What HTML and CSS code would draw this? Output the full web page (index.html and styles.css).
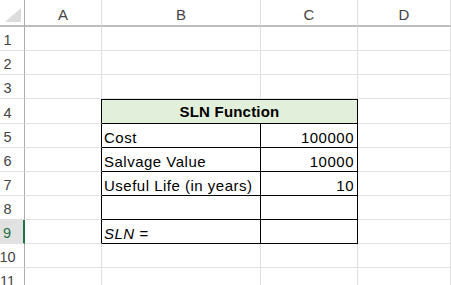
FILE: index.html
```html
<!DOCTYPE html>
<html>
<head>
<meta charset="utf-8">
<link rel="stylesheet" href="styles.css">
</head>
<body>
<div class="sheet">
  <div class="corner"><svg width="24" height="26" viewBox="0 0 24 26"><polygon points="21,8 21,22 5,22" fill="#dcdcdc"/></svg></div>
  <div class="colh">A</div>
  <div class="colh">B</div>
  <div class="colh">C</div>
  <div class="colh">D</div>

  <div class="rowh">1</div><div class="c"></div><div class="c"></div><div class="c"></div><div class="c"></div>
  <div class="rowh">2</div><div class="c"></div><div class="c"></div><div class="c"></div><div class="c"></div>
  <div class="rowh">3</div><div class="c"></div><div class="c"></div><div class="c"></div><div class="c"></div>

  <div class="rowh">4</div><div class="c edge"></div><div class="c title">SLN Function</div><div class="c"></div>
  <div class="rowh">5</div><div class="c edge"></div><div class="c tb lbl">Cost</div><div class="c tc num">100000</div><div class="c"></div>
  <div class="rowh">6</div><div class="c edge"></div><div class="c tb lbl">Salvage Value</div><div class="c tc num">10000</div><div class="c"></div>
  <div class="rowh">7</div><div class="c edge"></div><div class="c tb lbl">Useful Life (in years)</div><div class="c tc num">10</div><div class="c"></div>
  <div class="rowh">8</div><div class="c edge"></div><div class="c tb lbl"></div><div class="c tc num"></div><div class="c"></div>
  <div class="rowh sel">9</div><div class="c edge"></div><div class="c tb lbl italic">SLN =</div><div class="c tc num"></div><div class="c"></div>

  <div class="rowh">10</div><div class="c"></div><div class="c"></div><div class="c"></div><div class="c"></div>
  <div class="rowh">11</div><div class="c"></div><div class="c"></div><div class="c"></div><div class="c"></div>
</div>
</body>
</html>
```
FILE: styles.css
```css
html, body {
  margin: 0;
  padding: 0;
  background: #ffffff;
  overflow: hidden;
}
.sheet {
  display: grid;
  grid-template-columns: 25px 77px 159px 97px 93px;
  grid-template-rows: 27px 24px 24px 24px 25px 24px 24px 24px 24px 24px 24px 24px;
  width: 451px;
  font-family: "Liberation Sans", Arial, sans-serif;
  font-size: 15px;
  line-height: 18px;
  color: #000;
}
.sheet > div {
  box-sizing: border-box;
}
.corner {
  border-right: 1px solid #ababab;
  border-bottom: 2px solid #bdbdbd;
}
.corner svg {
  display: block;
}
.colh {
  display: flex;
  align-items: flex-end;
  justify-content: center;
  padding-bottom: 1px;
  color: #444444;
  border-right: 1px solid #e1e1e1;
  border-bottom: 2px solid #bdbdbd;
}
.rowh {
  display: flex;
  align-items: flex-end;
  justify-content: center;
  padding-right: 9px;
  padding-bottom: 1px;
  font-size: 14.5px;
  color: #444444;
  border-right: 1px solid #ababab;
  border-bottom: 1px solid #e1e1e1;
}
.rowh.sel {
  background: #e1e1e1;
  color: #217346;
  border-right: 2px solid #217346;
}
.c {
  display: flex;
  align-items: flex-end;
  border-right: 1px solid #e1e1e1;
  border-bottom: 1px solid #e1e1e1;
  letter-spacing: 0.5px;
  white-space: nowrap;
}
.c.edge {
  border-right-color: #000;
}
.title {
  grid-column: span 2;
  justify-content: center;
  align-items: center;
  font-weight: bold;
  letter-spacing: 0.2px;
  background: #e2efda;
  border-top: 1px solid #000;
  border-right: 1px solid #000;
  border-bottom: 1px solid #000;
}
.tb {
  border-right-color: #000;
  border-bottom-color: #000;
}
.tc {
  border-right-color: #000;
  border-bottom-color: #000;
}
.lbl {
  padding-left: 2px;
}
.num {
  justify-content: flex-end;
  padding-right: 3px;
}
.italic {
  font-style: italic;
}
```
